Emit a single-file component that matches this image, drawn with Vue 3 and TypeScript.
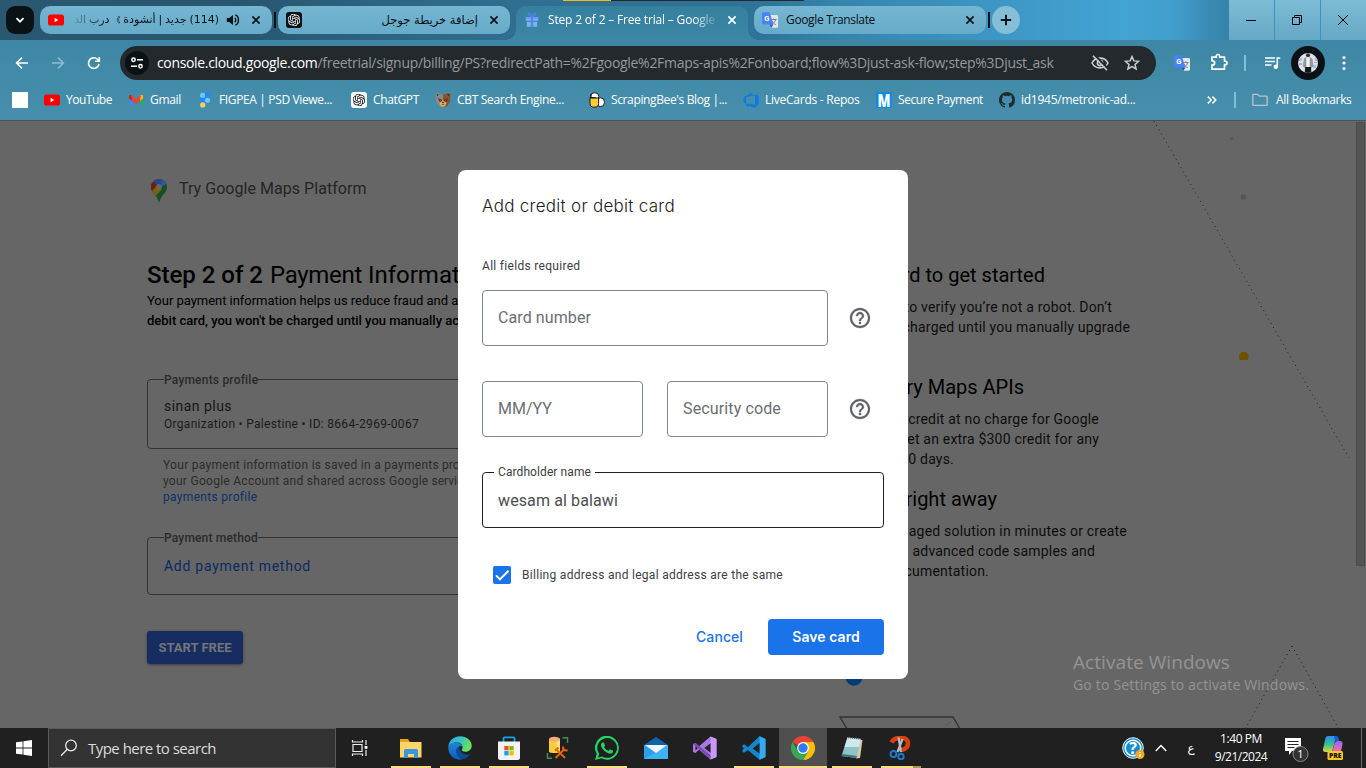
<script setup lang="ts">
interface Bookmark {
  icon: string
  label: string
  slot: number
  fit: number
}
interface Line {
  text: string
  end: number
}
interface Section {
  title: Line
  body: Line[]
}
interface TaskApp {
  icon: string
  state: 'none' | 'open' | 'active' | 'multi'
}

// Spreads a label over a fixed measure by adjusting its tracking.
const vFit = {
  mounted(el: HTMLElement, binding: { value: number }) {
    const natural = el.getBoundingClientRect().width
    const count = (el.textContent ?? '').length
    if (count > 1) el.style.letterSpacing = `${((binding.value - natural) / count).toFixed(3)}px`
  },
}

const bookmarks: Bookmark[] = [
  { icon: 'youtube', label: 'YouTube', slot: 84, fit: 46 },
  { icon: 'gmail', label: 'Gmail', slot: 69, fit: 31 },
  { icon: 'figpea', label: 'FIGPEA | PSD Viewe...', slot: 154, fit: 113 },
  { icon: 'gpt', label: 'ChatGPT', slot: 84, fit: 46 },
  { icon: 'bear', label: 'CBT Search Engine...', slot: 154, fit: 107 },
  { icon: 'bee', label: "ScrapingBee's Blog |...", slot: 154, fit: 116 },
  { icon: 'devops', label: 'LiveCards - Repos', slot: 133, fit: 94.5 },
  { icon: 'm', label: 'Secure Payment', slot: 123, fit: 85 },
  { icon: 'github', label: 'id1945/metronic-ad...', slot: 150, fit: 114.5 },
]

const COLUMN_LEFT = 780
const sections: Section[] = [
  {
    title: { text: 'card to get started', end: 1045 },
    body: [
      { text: 'to verify you’re not a robot. Don’t', end: 1112 },
      { text: 'charged until you manually upgrade', end: 1130 },
    ],
  },
  {
    title: { text: 'Try Maps APIs', end: 1024 },
    body: [
      { text: 'credit at no charge for Google', end: 1099 },
      { text: 'get an extra $300 credit for any', end: 1099 },
      { text: '90 days.', end: 954 },
    ],
  },
  {
    title: { text: 'right away', end: 997 },
    body: [
      { text: 'managed solution in minutes or create', end: 1127 },
      { text: 'advanced code samples and', end: 1095 },
      { text: 'documentation.', end: 989 },
    ],
  },
]

const apps: TaskApp[] = [
  { icon: 'explorer', state: 'open' },
  { icon: 'edge', state: 'open' },
  { icon: 'store', state: 'open' },
  { icon: 'sql', state: 'none' },
  { icon: 'whatsapp', state: 'open' },
  { icon: 'mail', state: 'none' },
  { icon: 'vs', state: 'none' },
  { icon: 'vscode', state: 'open' },
  { icon: 'chrome', state: 'active' },
  { icon: 'notepad', state: 'open' },
  { icon: 'snip', state: 'multi' },
]

const lineWidth = (line: Line) => ({ width: `${line.end - COLUMN_LEFT}px` })
</script>

<template>
  <div class="screen">
    <svg class="defs" width="0" height="0">
      <defs>
        <symbol id="i-youtube" viewBox="0 0 16 16">
          <rect x="0" y="2.5" width="16" height="11" rx="2.6" fill="#f00" />
          <path d="M6.6 5.8v4.4L10.3 8z" fill="#fff" />
        </symbol>
        <symbol id="i-gmail" viewBox="0 0 16 16">
          <path d="M1 4.2v9h3.2V6.6z" fill="#4285f4" />
          <path d="M15 4.2v9h-3.2V6.6z" fill="#34a853" />
          <path d="M11.8 3.2 15 3v3.6l-3.2 2.5z" fill="#fbbc04" />
          <path d="M1 3l3.2.2v5.9L1 6.6z" fill="#c5221f" />
          <path d="M3 3 8 6.9 13 3l-1.2 6.1L8 11.8 4.2 9.1z" fill="#ea4335" />
        </symbol>
        <symbol id="i-figpea" viewBox="0 0 16 16">
          <circle cx="5.7" cy="3.4" r="2.6" fill="#74c6ff" />
          <circle cx="10.6" cy="3.4" r="2.6" fill="#1a8cff" />
          <circle cx="5.7" cy="8.2" r="2.6" fill="#1a8cff" />
          <circle cx="10.6" cy="8.2" r="2.5" fill="#74c6ff" />
          <circle cx="5.7" cy="12.9" r="2.6" fill="#f8d05a" />
        </symbol>
        <symbol id="knot" viewBox="0 0 24 24">
          <path fill="currentColor" d="M22.2819 9.8211a5.9847 5.9847 0 0 0-.5157-4.9108 6.0462 6.0462 0 0 0-6.5098-2.9A6.0651 6.0651 0 0 0 4.9807 4.1818a5.9847 5.9847 0 0 0-3.9977 2.9 6.0462 6.0462 0 0 0 .7427 7.0966 5.98 5.98 0 0 0 .511 4.9107 6.051 6.051 0 0 0 6.5146 2.9001A5.9847 5.9847 0 0 0 13.2599 24a6.0557 6.0557 0 0 0 5.7718-4.2058 5.9894 5.9894 0 0 0 3.9977-2.9001 6.0557 6.0557 0 0 0-.7475-7.0729zm-9.022 12.6081a4.4755 4.4755 0 0 1-2.8764-1.0408l.1419-.0804 4.7783-2.7582a.7948.7948 0 0 0 .3927-.6813v-6.7369l2.02 1.1686a.071.071 0 0 1 .038.052v5.5826a4.504 4.504 0 0 1-4.4945 4.4944zm-9.6607-4.1254a4.4708 4.4708 0 0 1-.5346-3.0137l.142.0852 4.783 2.7582a.7712.7712 0 0 0 .7806 0l5.8428-3.3685v2.3324a.0804.0804 0 0 1-.0332.0615L9.74 19.9502a4.4992 4.4992 0 0 1-6.1408-1.6464zM2.3408 7.8956a4.485 4.485 0 0 1 2.3655-1.9728V11.6a.7664.7664 0 0 0 .3879.6765l5.8144 3.3543-2.0201 1.1685a.0757.0757 0 0 1-.071 0l-4.8303-2.7865A4.504 4.504 0 0 1 2.3408 7.872zm16.5963 3.8558L13.1038 8.364 15.1192 7.2a.0757.0757 0 0 1 .071 0l4.8303 2.7913a4.4944 4.4944 0 0 1-.6765 8.1042v-5.6772a.79.79 0 0 0-.407-.667zm2.0107-3.0231l-.142-.0852-4.7735-2.7818a.7759.7759 0 0 0-.7854 0L9.409 9.2297V6.8974a.0662.0662 0 0 1 .0284-.0615l4.8303-2.7866a4.4992 4.4992 0 0 1 6.6802 4.66zM8.3065 12.863l-2.02-1.1638a.0804.0804 0 0 1-.038-.0567V6.0742a4.4992 4.4992 0 0 1 7.3757-3.4537l-.142.0805L8.704 5.459a.7948.7948 0 0 0-.3927.6813zm1.0976-2.3654l2.602-1.4998 2.6069 1.4998v2.9994l-2.5974 1.4997-2.6067-1.4997Z" />
        </symbol>
        <symbol id="i-gpt" viewBox="0 0 16 16">
          <rect width="16" height="16" rx="3" fill="#fff" />
          <use href="#knot" x="1.7" y="1.7" width="12.6" height="12.6" color="#111" />
        </symbol>
        <symbol id="i-gptdark" viewBox="0 0 16 16">
          <rect width="16" height="16" rx="3" fill="#0b1216" />
          <use href="#knot" x="1.7" y="1.7" width="12.6" height="12.6" color="#fff" />
        </symbol>
        <symbol id="i-bear" viewBox="0 0 16 16">
          <path d="M.5 1.5 4 1l2 1.500h2v12.800L4 14 1 10z" fill="#85898b" />
          <path d="M15.500 1.500 12 1l-2 1.500H8v12.800l4-1.300 3-4z" fill="#8a5424" />
          <path d="M1.500 2.600 3.600 2l-1 2.500zM14.500 2.600 12.400 2l1 2.500z" fill="#3a2a20" />
          <path d="M3 6 7 8v2.500L4.500 9.500zM13 6 9 8v2.500l2.500-1z" fill="#3a2a20" />
          <path d="M3.800 7.300 6.600 8.300 5.400 9zM12.200 7.300 9.400 8.300l1.200.7z" fill="#f33" />
          <path d="M4.500 10.600 8 8.600l3.500 2L10 14.500H6z" fill="#e0b05e" />
          <path d="M6.600 10h2.800L8 11.500zM6.400 13l1.600-.8 1.600.8z" fill="#2a1a10" />
        </symbol>
        <symbol id="i-bee" viewBox="0 0 16 16">
          <g stroke="#15191b" stroke-width="1">
            <rect x="1.600" y=".8" width="8.200" height="7.400" rx="3.600" fill="#fff" />
            <rect x="7.600" y="5.800" width="7.800" height="8.800" rx="3.800" fill="#fff" />
            <path d="M1 6h8.600v5.400a4.300 3.800 0 0 1-8.600 0z" fill="#fc3" />
            <path d="M.6 5.600h6M2 2v3" fill="none" />
          </g>
        </symbol>
        <symbol id="i-devops" viewBox="0 0 16 16">
          <path d="M.5 6.200 2 4.200 6.600 2.400V.6l4 3L3 5.100v6.100L.5 10.500zM15.600 3.200v9.400l-3.900 3.200-6.200-2v2L2 11.400l10 1.100V4.100l-5-1.400z" fill="#0a7be0" />
        </symbol>
        <symbol id="i-m" viewBox="0 0 16 16">
          <rect width="16" height="16" fill="#0a8be8" />
          <text x="8" y="14.700" text-anchor="middle" font-family="Open Sans, sans-serif" font-weight="800" font-size="18" textLength="13" lengthAdjust="spacingAndGlyphs" fill="#fff">M</text>
        </symbol>
        <symbol id="i-github" viewBox="0 0 16 16">
          <path fill="#1f2a30" d="M8 0C3.58 0 0 3.58 0 8c0 3.54 2.29 6.53 5.47 7.59.4.07.55-.17.55-.38v-1.49c-2.01.37-2.53-.49-2.69-.94-.09-.23-.48-.94-.82-1.13-.28-.15-.68-.52-.01-.53.63-.01 1.08.58 1.23.82.72 1.21 1.87.87 2.33.66.07-.52.28-.87.51-1.07-1.78-.2-3.64-.89-3.64-3.95 0-.87.31-1.59.82-2.15-.08-.2-.36-1.02.08-2.12 0 0 .67-.21 2.2.82a7.6 7.6 0 0 1 4 0c1.53-1.04 2.2-.82 2.2-.82.44 1.1.16 1.92.08 2.12.51.56.82 1.27.82 2.15 0 3.07-1.87 3.75-3.65 3.95.29.25.54.73.54 1.48v2.2c0 .21.15.46.55.38A8 8 0 0 0 16 8c0-4.42-3.58-8-8-8z" />
        </symbol>
        <symbol id="i-translate" viewBox="0 0 16 16">
          <path d="M8 3h6.600A1.400 1.400 0 0 1 16 4.400v10A1.400 1.400 0 0 1 14.600 15.800H9.500z" fill="#e3e6ea" />
          <path d="M8.600 7.500h6M11.600 6.500v1M13.700 7.600c-.5 2-2.300 4-4 4.900M10 9c1 2 2.300 3 3.800 3.600" stroke="#6c7780" stroke-width=".9" fill="none" />
          <path d="M1.300.3h6.300l3.800 12.200H1.300A1.300 1.300 0 0 1 0 11.200V1.600A1.300 1.300 0 0 1 1.300.3z" fill="#4683f3" />
          <path d="M7.700 12.500h3.700L9.300 15.800z" fill="#2556c4" />
          <text x="4.900" y="8.900" text-anchor="middle" font-family="Roboto, sans-serif" font-weight="700" font-size="7.500" fill="#fff">G</text>
        </symbol>
        <symbol id="i-x" viewBox="0 0 10 10">
          <path d="M1.400 1.400l7.200 7.200M8.600 1.400 1.400 8.600" stroke="currentColor" stroke-width="1.700" />
        </symbol>
        <symbol id="i-help" viewBox="0 0 24 24">
          <path fill="#5f6368" stroke="#5f6368" stroke-width=".3" d="M11 18h2v-2h-2v2zm1-16C6.480 2 2 6.480 2 12s4.480 10 10 10 10-4.480 10-10S17.520 2 12 2zm0 18c-4.410 0-8-3.590-8-8s3.590-8 8-8 8 3.590 8 8-3.590 8-8 8zm0-14c-2.210 0-4 1.790-4 4h2c0-1.100.9-2 2-2s2 .9 2 2c0 2-3 1.750-3 5h2c0-2.250 3-2.500 3-5 0-2.210-1.790-4-4-4z" />
        </symbol>

        <symbol id="t-explorer" viewBox="0 0 24 24">
          <path d="M1 3h8l2 3h10.500v15H1z" fill="#e8a21c" />
          <rect x="1" y="6" width="21.500" height="15.500" fill="#fbd566" />
          <path d="M5 22v-7.500A1.500 1.500 0 0 1 6.500 13h11a1.500 1.500 0 0 1 1.500 1.500V22h-4v-4H9v4z" fill="#3b94dc" />
        </symbol>
        <symbol id="t-edge" viewBox="0 0 24 24">
          <defs>
            <linearGradient id="eg1" x1="0" y1="0" x2="1" y2=".4">
              <stop offset="0" stop-color="#30a7e8" />
              <stop offset=".5" stop-color="#35c1c9" />
              <stop offset="1" stop-color="#67e25a" />
            </linearGradient>
            <linearGradient id="eg2" x1="0" y1="0" x2="0" y2="1">
              <stop offset="0" stop-color="#1c86d8" />
              <stop offset="1" stop-color="#0f5cb8" />
            </linearGradient>
          </defs>
          <path d="M.3 12C.3 5.300 5.400.3 12 .3c6.800 0 11.700 4.300 11.700 9.500 0 3.600-2.800 6-6 6-2.600 0-4-1-4-2 0-.700.800-1 .800-2.600C14.500 8.600 12 6.600 8.600 6.600 4 6.600.8 9.300.3 12z" fill="url(#eg1)" />
          <path d="M.3 12c.3-3 3.200-5.400 7.400-5.400 3.400 0 6 1.800 6.600 4C12 9.500 8.500 11 8.500 15c0 4.600 4 8.200 7 8-1.200.5-2.300.7-3.500.7C5.400 23.700.3 18.500.3 12z" fill="url(#eg2)" />
          <path d="M8.500 15c0-2.200 1.200-4 3-4.700-.6 4.500 3 8.300 7 8.300 1.500 0 2.600-.4 3.600-.9-1.600 3-4.300 5.300-7 5.300-3.400 0-6.600-3.600-6.600-8z" fill="#0b4b94" />
        </symbol>
        <symbol id="t-store" viewBox="0 0 24 24">
          <path d="M6.500 6V2.300a1 1 0 0 1 1-1h9a1 1 0 0 1 1 1V6" fill="none" stroke="#18a0ea" stroke-width="1.800" />
          <path d="M1 5.500h22v16A2.500 2.500 0 0 1 20.500 24h-17A2.500 2.500 0 0 1 1 21.500z" fill="#f2f2f2" />
          <rect x="7.300" y="10" width="4.300" height="4.300" fill="#f25022" />
          <rect x="12.400" y="10" width="4.300" height="4.300" fill="#7fba00" />
          <rect x="7.300" y="15.100" width="4.300" height="4.300" fill="#00a4ef" />
          <rect x="12.400" y="15.100" width="4.300" height="4.300" fill="#ffb900" />
        </symbol>
        <symbol id="t-sql" viewBox="0 0 24 24">
          <path d="M3 3h11v12.500c0 2-11 2-11 0z" fill="#f6cd3a" />
          <path d="M10.500 4h3.500v12h-3.500z" fill="#fbe27a" />
          <ellipse cx="8.500" cy="3.200" rx="5.500" ry="2.500" fill="#f4ac7a" />
          <path d="M16.500 1.800h5V7M1.500 17v5.300H6" fill="none" stroke="#3f8f5a" stroke-width="1.500" />
          <path d="m10.500 13.500 8.500 8.500M17.500 14 9.500 22" stroke="#e8660c" stroke-width="1.900" />
          <path d="m9 14.500 3.500-3M17 10.500l.5 3.500 4 .5" fill="none" stroke="#e8660c" stroke-width="2" />
        </symbol>
        <symbol id="t-whatsapp" viewBox="0 0 24 24">
          <path fill="#25d366" d="M17.472 14.382c-.297-.149-1.758-.867-2.030-.967-.273-.099-.471-.148-.670.150-.197.297-.767.966-.940 1.164-.173.199-.347.223-.644.075-.297-.150-1.255-.463-2.390-1.475-.883-.788-1.480-1.761-1.653-2.059-.173-.297-.018-.458.130-.606.134-.133.298-.347.446-.520.149-.174.198-.298.298-.497.099-.198.050-.371-.025-.520-.075-.149-.669-1.612-.916-2.207-.242-.579-.487-.500-.669-.510-.173-.008-.371-.010-.570-.010-.198 0-.520.074-.792.372-.272.297-1.040 1.016-1.040 2.479 0 1.462 1.065 2.875 1.213 3.074.149.198 2.096 3.200 5.077 4.487.709.306 1.262.489 1.694.625.712.227 1.360.195 1.871.118.571-.085 1.758-.719 2.006-1.413.248-.694.248-1.289.173-1.413-.074-.124-.272-.198-.570-.347M12 21.800a9.800 9.800 0 0 1-5.030-1.380l-3.750.98 1-3.650A9.870 9.870 0 1 1 12 21.800m8.400-18.300A11.800 11.800 0 0 0 1.750 17.800L.06 24l6.300-1.650A11.880 11.880 0 0 0 20.400 3.500" />
        </symbol>
        <symbol id="t-mail" viewBox="0 0 24 24">
          <path d="M0 9 12 1l12 8v3H0z" fill="#0f62b0" />
          <path d="M0 9v14h24V9z" fill="#2aa0ea" />
          <path d="M0 23 24 9v14z" fill="#4cc0f8" opacity=".6" />
          <path d="M1 9h22l-11 8z" fill="#f3f7fb" />
        </symbol>
        <symbol id="t-vs" viewBox="0 0 24 24">
          <path d="M17.500.5 23.500 3v18l-6 2.500L6 13.800 2.500 17 0 16V8l2.500-1L6 10.200z" fill="#a878e0" />
          <path d="M17.500.5 23.500 3v18l-6 2.500z" fill="#c79bf5" />
          <path d="M17.500 7.200v9.600L11.400 12zM2.500 9.500v5L5 12z" fill="#222" />
          <path d="M2.500 7 17.500 19v4.500L0 8z" fill="#7b49bd" />
        </symbol>
        <symbol id="t-vscode" viewBox="0 0 24 24">
          <path d="M17.500.3 5.800 11.200 2.200 8.300.4 9.300v1.800L2 12.500.4 14v1.800l1.800 1 3.600-2.900 11.700 9.800 6-2.700V3z" fill="#1486cf" />
          <path d="M17.500.3 23.500 3v18l-6 2.700z" fill="#35aaf0" />
          <path d="M17.500 7v10.600L10.600 12.400z" fill="#222" />
        </symbol>
        <symbol id="t-chrome" viewBox="0 0 24 24">
          <path d="M12 12 1.600 6A12 12 0 0 1 22.400 6z" fill="#ea4335" />
          <path d="M12 12V6h10.400A12 12 0 0 1 12 24l5.200-9z" fill="#fbbc05" />
          <path d="M12 12l5.200 3L12 24A12 12 0 0 1 1.600 6l5.200 9z" fill="#34a853" />
          <circle cx="12" cy="12" r="5.900" fill="#fff" />
          <circle cx="12" cy="12" r="4.700" fill="#3079f0" />
        </symbol>
        <symbol id="t-notepad" viewBox="0 0 24 24">
          <path d="M7 2 22.500 4l-2.500 18-4 .500z" fill="#d8c9a4" />
          <path d="M7.500 1.500 21 3l-4.500 19L1.500 20z" fill="#8fc3cb" />
          <path d="M7.500 1.500 21 3l-2 8L4.500 11z" fill="#cfe8ec" />
          <path d="M8 1.500 21 3" stroke="#555" stroke-width="1.500" stroke-dasharray="1 1" />
          <path d="M1.500 20 16.500 22l.5-2-14.500-2z" fill="#3c7780" />
        </symbol>
        <symbol id="t-snip" viewBox="0 0 24 24">
          <path d="M2.500 6.500C6 0 19 0 19 7c0 5-3 6.500-7 7" fill="none" stroke="#d8400f" stroke-width="4.500" />
          <path d="M9.500 1.500 12 16M13.500 3 8.500 16" stroke="#b8bcc0" stroke-width="2.200" />
          <circle cx="4.500" cy="18" r="2.900" fill="none" stroke="#1e78c8" stroke-width="2" />
          <circle cx="12" cy="20.500" r="2.700" fill="none" stroke="#1e78c8" stroke-width="2" />
        </symbol>
      </defs>
    </svg>

    <header class="tabstrip">
      <div class="top-progress"><i></i></div>
      <button class="tab-search">
        <svg width="10" height="10" viewBox="0 0 10 10"><path d="M1.500 3.200 5 6.700l3.500-3.500" fill="none" stroke="#fff" stroke-width="1.800" /></svg>
      </button>
      <div class="tab tab-rtl">
        <svg class="ico"><use href="#i-youtube" /></svg>
        <span class="arabic fade-left" dir="rtl">(114) جديد | أنشودة <span class="mark">》</span> درب الد</span>
        <svg class="speaker" width="14" height="14" viewBox="0 0 14 14">
          <path d="M.8 5v4h2.500L7 12V2L3.300 5z" fill="#0b1216" />
          <path d="M8.700 4.700c1.400 1 1.400 3.600 0 4.600M9.300 1.800c4.200 1.500 4.200 8.900 0 10.400" fill="none" stroke="#0b1216" stroke-width="1.400" />
        </svg>
        <svg class="x"><use href="#i-x" /></svg>
      </div>
      <i class="tab-sep"></i>
      <div class="tab tab-rtl">
        <svg class="ico"><use href="#i-gptdark" /></svg>
        <span class="arabic second" dir="rtl">إضافة خريطة جوجل</span>
        <svg class="x"><use href="#i-x" /></svg>
      </div>
      <div class="tab-active">
        <svg class="ico" viewBox="0 0 16 16">
          <path d="M1.800 5h5.400v3.800H1.800zM8.800 5h5.400v3.800H8.800zM2.800 9.800h4.400v5H2.800zM8.800 9.800h4.400v5H8.800z" fill="#7db0f8" />
          <path d="M7.600 4.600C4 4.600 3.400 1.600 5 1.400c1.400 0 2.600 1.600 3 3 .4-1.400 1.600-3 3-3 1.600.2 1 3.200-2.600 3.200" fill="none" stroke="#4d80ec" stroke-width="1.300" />
          <path d="M6.400 5h3.200v9.800H6.400zM1.500 5h13v2h-13z" fill="#5b8ff2" opacity=".6" />
        </svg>
        <span class="ui fade-right"><span v-fit="167" class="fit">Step 2 of 2 – Free trial – Google</span></span>
        <svg class="x"><use href="#i-x" /></svg>
      </div>
      <div class="tab tab-last">
        <svg class="ico"><use href="#i-translate" /></svg>
        <span class="ui"><span v-fit="89" class="fit">Google Translate</span></span>
        <svg class="x"><use href="#i-x" /></svg>
      </div>
      <i class="tab-sep"></i>
      <button class="new-tab">
        <svg width="12" height="12" viewBox="0 0 12 12"><path d="M6 .8v10.400M.8 6h10.400" stroke="#0b1216" stroke-width="1.900" /></svg>
      </button>
      <div class="win-controls">
        <span><svg width="10" height="10" viewBox="0 0 10 10"><path d="M0 5.500h10" stroke="#000" /></svg></span>
        <span><svg width="10" height="10" viewBox="0 0 10 10"><path d="M.5 2.500h7v7h-7zM2.500 2.500v-2h7v7h-2" fill="none" stroke="#000" /></svg></span>
        <span><svg width="10" height="10" viewBox="0 0 10 10"><path d="M0 0l10 10M10 0 0 10" stroke="#000" /></svg></span>
      </div>
    </header>

    <div class="toolbar">
      <svg class="nav" width="14" height="14" viewBox="0 0 14 14"><path d="M13 7H2M7 1.600 1.600 7 7 12.400" fill="none" stroke="#fff" stroke-width="1.600" /></svg>
      <svg class="nav" width="14" height="14" viewBox="0 0 14 14"><path d="M1 7h11M7 1.600 12.400 7 7 12.400" fill="none" stroke="#8dbccf" stroke-width="1.600" /></svg>
      <svg class="nav" width="14" height="14" viewBox="0 0 14 14"><path d="M12 8a5.300 5.300 0 1 1-1.500-4.700l1.500 1.500" fill="none" stroke="#fff" stroke-width="1.700" /><path d="M12.300 1v4.300H8" fill="none" stroke="#fff" stroke-width="1.600" /></svg>
      <div class="omnibox">
        <span class="site">
          <svg width="14" height="14" viewBox="0 0 14 14" fill="none" stroke="#fff" stroke-width="1.500"><circle cx="3.500" cy="3.800" r="1.700" /><path d="M7 3.800h6" /><circle cx="10.500" cy="10.200" r="1.700" /><path d="M1 10.200h6" /></svg>
        </span>
        <span class="url"><span v-fit="160.500" class="fit host">console.cloud.google.com</span><span v-fit="736" class="fit">/freetrial/signup/billing/PS?redirectPath=%2Fgoogle%2Fmaps-apis%2Fonboard;flow%3Djust-ask-flow;step%3Djust_ask</span></span>
        <svg class="eye" width="18" height="16" viewBox="0 0 18 16" fill="none" stroke="#c9ced0" stroke-width="1.600"><path d="M1 8c3.400-6.500 12.600-6.500 16 0-3.400 6.500-12.600 6.500-16 0z" /><circle cx="9" cy="8" r="2.600" /><path d="M3.500-.2l14 14.400" stroke="#23292d" stroke-width="2" /><path d="M2 .8l14 14.400" /></svg>
        <svg class="star" width="16" height="16" viewBox="0 0 16 16"><path d="m8 1.600 1.900 4.300 4.700.4-3.600 3.100 1.100 4.600L8 11.600 3.900 14 5 9.400 1.400 6.300l4.700-.4z" fill="none" stroke="#c9ced0" stroke-width="1.500" /></svg>
      </div>
      <svg class="ext" width="16" height="16"><use href="#i-translate" /></svg>
      <svg class="puzzle" width="18" height="18" viewBox="0 0 18 18"><path d="M2 4.200h4.300V3.200a1.700 1.700 0 0 1 3.400 0v1h4.800v4h.8a1.700 1.700 0 0 1 0 3.400h-.8v4.600H2v-4.300h.6a2 2 0 0 0 0-4H2z" fill="none" stroke="#fff" stroke-width="1.700" stroke-linejoin="round" /></svg>
      <i class="bar"></i>
      <svg class="queue" width="16" height="14" viewBox="0 0 16 14"><path d="M0 2h10M0 5.500h10M0 9h6.500" stroke="#fff" stroke-width="1.500" /><path d="M12.300 11V2h3" fill="none" stroke="#fff" stroke-width="1.600" /><circle cx="10.800" cy="10.800" r="2.200" fill="#fff" /></svg>
      <svg class="avatar" width="34" height="34" viewBox="0 0 34 34">
        <defs><clipPath id="av"><circle cx="17" cy="17" r="10" /></clipPath></defs>
        <circle cx="17" cy="17" r="17" fill="#0b1216" />
        <g clip-path="url(#av)">
          <rect x="7" y="7" width="20" height="20" fill="#dfe2ea" />
          <path d="M8 12h3v3H8zM24 11h3v4h-3zM22 19h3v3h-3z" fill="#aebbd8" />
          <path d="M8 17h3v2H8zM23 16h4v1h-4z" fill="#d9a3ae" />
          <path d="M13 12.500 15 11h4l2.500 2 .8 7-1.800 2H13.500l-1.700-2z" fill="#8f9a9a" />
          <path d="M15.300 11h3.400v11h-3.400z" fill="#f0f2f2" />
          <circle cx="17" cy="9.300" r="2" fill="#3b2c25" />
          <path d="M14.300 21h5.700l.5 7h-7z" fill="#14181c" />
        </g>
      </svg>
      <svg class="dots" width="4" height="16" viewBox="0 0 4 16" fill="#fff"><circle cx="2" cy="2.500" r="1.600" /><circle cx="2" cy="8" r="1.600" /><circle cx="2" cy="13.500" r="1.600" /></svg>
    </div>

    <nav class="bookmarks">
      <i class="blank"></i>
      <div v-for="b in bookmarks" :key="b.label" class="bookmark" :style="{ width: `${b.slot}px` }">
        <svg class="ico"><use :href="`#i-${b.icon}`" /></svg>
        <span v-fit="b.fit" class="fit">{{ b.label }}</span>
      </div>
      <svg class="more" width="10" height="8" viewBox="0 0 10 8"><path d="M.8.600 4.200 4 .8 7.400M5.400.600 8.800 4 5.400 7.400" fill="none" stroke="#fff" stroke-width="1.500" /></svg>
      <i class="bar"></i>
      <svg class="folder" width="16" height="14" viewBox="0 0 16 14"><path d="M.8 2.300q0-1 1-1h4l1.600 1.800h6.800q1 0 1 1v7.300q0 1-1 1H1.800q-1 0-1-1z" fill="none" stroke="#c0c3c4" stroke-width="1.300" /></svg>
      <span v-fit="75.500" class="fit">All Bookmarks</span>
    </nav>

    <main class="page">
      <svg class="decor" width="1366" height="607" viewBox="0 121 1366 607">
        <g stroke="#1c1c1c" fill="none">
          <path d="M1154 121 1349 458" stroke-width="1" stroke-dasharray="1 3.860" />
          <path d="M1292 646 1245 729M1292 646l47 83" stroke-width="1" stroke-dasharray="1 3.700" />
          <path d="M847 729 840 717h113l7 12" stroke="#333" stroke-width="1.400" />
        </g>
        <circle cx="1231.500" cy="138.500" r="1.700" fill="#585858" />
        <circle cx="1243.500" cy="197" r="2.700" fill="#555" />
        <path d="M1240.200 360a4.900 4.900 0 1 1 7.200 0z" fill="#6e5000" />
        <circle cx="854" cy="677.500" r="8.300" fill="#003c78" />
        <path d="m946 725 5-3" stroke="#555" stroke-dasharray="2 2" />
      </svg>

      <section class="left">
        <div class="brand">
          <svg width="16" height="24" viewBox="0 0 16 24">
            <defs><clipPath id="pin"><path d="M8 0a8 8 0 0 1 8 8c0 3.200-1.800 5.300-3.800 7.800C10.300 18.200 9.200 20 8.600 22.500c-.2 1-1 1-1.200 0C6.800 20 5.700 18.200 3.800 15.800 1.800 13.300 0 11.200 0 8a8 8 0 0 1 8-8z" /></clipPath></defs>
            <g clip-path="url(#pin)">
              <path d="M0 0h16v24H0z" fill="#194f27" />
              <path d="M2 0h14v4.500L9.500 9 8 8 2 3z" fill="#26488a" />
              <path d="M10.500 0H16v4.500L11 7z" fill="#30599c" />
              <path d="M2 2.500 6.500 6 1.500 12.500 0 11V4z" fill="#701d17" />
              <path d="M1 12 5.800 6.500 10.500 10.500 4.300 17.500 2 15z" fill="#79600a" />
            </g>
            <circle cx="8" cy="8" r="3" fill="#666" />
          </svg>
          <span v-fit="187.500" class="fit">Try Google Maps Platform</span>
        </div>
        <h1><b><span v-fit="116" class="fit">Step 2 of 2</span></b> <span class="rest"><span v-fit="92" class="fit">Payment</span> Information</span></h1>
        <p class="intro"><span v-fit="301" class="fit">Your payment information helps us reduce fraud and</span> abuse</p>
        <p class="intro strong"><span v-fit="295" class="fit">debit card, you won't be charged until you manually</span> activate</p>

        <div class="box profile">
          <span class="legend"><span v-fit="94" class="fit">Payments profile</span></span>
          <div class="name"><span v-fit="68" class="fit">sinan plus</span></div>
          <div class="org"><span v-fit="255" class="fit">Organization • Palestine • ID: 8664-2969-0067</span></div>
        </div>
        <div class="note">
          <div><span v-fit="276" class="fit">Your payment information is saved in a payments</span> profile</div>
          <div><span v-fit="265.500" class="fit">your Google Account and shared across Google</span> services</div>
          <a><span v-fit="94" class="fit">payments profile</span></a>
        </div>
        <div class="box method">
          <span class="legend"><span v-fit="94" class="fit">Payment method</span></span>
          <a><span v-fit="147" class="fit">Add payment method</span></a>
        </div>
        <button class="start"><span v-fit="73" class="fit">START FREE</span></button>
      </section>

      <section class="right">
        <article v-for="s in sections" :key="s.title.text">
          <h2 :style="lineWidth(s.title)">{{ s.title.text }}</h2>
          <p v-for="l in s.body" :key="l.text" :style="lineWidth(l)">{{ l.text }}</p>
        </article>
      </section>

      <i class="scrollbar"></i>

      <div class="dialog">
        <h3><span v-fit="193" class="fit">Add credit or debit card</span></h3>
        <div class="hint"><span v-fit="98" class="fit">All fields required</span></div>
        <div class="row">
          <div class="field wide"><span v-fit="93" class="fit">Card number</span></div>
          <svg class="help"><use href="#i-help" /></svg>
        </div>
        <div class="row second">
          <div class="field half"><span v-fit="54" class="fit">MM/YY</span></div>
          <div class="field half"><span v-fit="98" class="fit">Security code</span></div>
          <svg class="help"><use href="#i-help" /></svg>
        </div>
        <div class="field holder">
          <span class="float"><span v-fit="93" class="fit">Cardholder name</span></span>
          <span v-fit="120" class="fit">wesam al balawi</span>
        </div>
        <div class="check">
          <svg width="18" height="18" viewBox="0 0 18 18"><rect width="18" height="18" rx="2" fill="#1a73e8" /><path d="m3 9.400 4 4 8.500-8.600" fill="none" stroke="#fff" stroke-width="2" /></svg>
          <span v-fit="261" class="fit">Billing address and legal address are the same</span>
        </div>
        <div class="actions">
          <button class="cancel"><span v-fit="47" class="fit">Cancel</span></button>
          <button class="save"><span v-fit="67.500" class="fit">Save card</span></button>
        </div>
      </div>

      <div class="watermark">
        <div class="big"><span v-fit="157" class="fit">Activate Windows</span></div>
        <div class="small"><span v-fit="236" class="fit">Go to Settings to activate Windows.</span></div>
      </div>
    </main>

    <footer class="taskbar">
      <span class="win"><svg width="16" height="16" viewBox="0 0 16 16" fill="#fff"><path d="M0 2.300 6.600 1.400v6.200H0zM7.400 1.300 16 0v7.600H7.400zM0 8.400h6.600v6.200L0 13.700zM7.400 8.400H16V16l-8.600-1.300z" /></svg></span>
      <div class="search">
        <svg width="18" height="18" viewBox="0 0 18 18" fill="none" stroke="#e6e6e6" stroke-width="1.300"><circle cx="11" cy="6.500" r="5.300" /><path d="M7.300 10.300 1 16.800" /></svg>
        <span v-fit="128" class="fit">Type here to search</span>
      </div>
      <span class="taskview"><svg width="18" height="18" viewBox="0 0 18 18" fill="none" stroke="#eee" stroke-width="1.200"><path d="M2 5.500h9v7H2zM1.500 1v2h10V1M1.500 17v-2h10v2M15 1v5M15 11v6" /><path d="M13.600 7h2.800v2.800h-2.800z" fill="#fff" stroke="none" /></svg></span>
      <span v-for="a in apps" :key="a.icon" class="app" :class="a.state">
        <svg width="24" height="24"><use :href="`#t-${a.icon}`" /></svg>
      </span>
      <div class="tray">
        <svg class="t-help" width="23" height="23" viewBox="0 0 23 23">
          <circle cx="11" cy="11" r="10.300" fill="#168ccf" stroke="#eaf4fa" stroke-width="1" />
          <circle cx="11" cy="11" r="7.800" fill="#168ccf" stroke="#fff" stroke-width="1.500" />
          <text x="11" y="17" text-anchor="middle" font-family="Open Sans, sans-serif" font-size="16" font-weight="700" fill="#fff">?</text>
          <circle cx="18" cy="17.500" r="4.500" fill="#f0a81e" /><path d="M18 15v1M18 17v3" stroke="#fff" stroke-width="1.300" />
        </svg>
        <svg class="t-up" width="12" height="8" viewBox="0 0 12 8"><path d="M.8 7 6 1.500 11.200 7" fill="none" stroke="#fff" stroke-width="1.400" /></svg>
        <span class="lang">ع</span>
        <div class="clock"><div><span v-fit="42" class="fit">1:40 PM</span></div><div><span v-fit="52.500" class="fit">9/21/2024</span></div></div>
        <svg class="t-note" width="26" height="26" viewBox="0 0 26 26">
          <path d="M1 1h16v13H8l-3 4v-4H1z" fill="#fff" /><path d="M3.500 4.500h11M3.500 7.500h11M3.500 10.500h7" stroke="#222" />
          <circle cx="16.500" cy="17" r="7.500" fill="#333" stroke="#8a8a8a" />
          <text x="16.500" y="21" text-anchor="middle" font-family="Open Sans, sans-serif" font-size="11" fill="#fff">1</text>
        </svg>
        <svg class="t-copilot" width="22" height="26" viewBox="0 0 22 26">
          <defs>
            <linearGradient id="cp1" x1="0" y1="0" x2="0" y2="1"><stop offset="0" stop-color="#2a8cf0" /><stop offset=".55" stop-color="#35c48a" /><stop offset="1" stop-color="#e0d53a" /></linearGradient>
            <linearGradient id="cp2" x1="0" y1="0" x2="0" y2="1"><stop offset="0" stop-color="#8c6cf0" /><stop offset=".6" stop-color="#f066b0" /><stop offset="1" stop-color="#f49a4a" /></linearGradient>
          </defs>
          <path d="M6 1h7.500q2 0 2.500 2l.6 3H13L10 17H3.500q-3 0-2.500-3L3.500 3Q4 1 6 1z" fill="url(#cp1)" />
          <path d="M16 21H9l3.500-12.500q.8-2.500 3-2.500h2.500q3 0 2.500 3L18.500 19q-.6 2-2.500 2z" fill="url(#cp2)" />
          <path d="M12 1h2q2 0 2.500 2l.7 3H13z" fill="#1c5bd8" />
          <rect x="5.500" y="16" width="15.500" height="9" rx="1.500" fill="#fcc81c" />
          <text x="13.200" y="23.200" text-anchor="middle" font-family="Open Sans, sans-serif" font-size="7.500" font-weight="800" textLength="12.500" lengthAdjust="spacingAndGlyphs" fill="#111">PRE</text>
        </svg>
        <i class="peek"></i>
      </div>
    </footer>
  </div>
</template>

<style>
body {
  margin: 0;
  overflow: hidden;
}
</style>

<style scoped>
* {
  box-sizing: border-box;
}
.screen {
  width: 1366px;
  height: 768px;
  display: flex;
  flex-direction: column;
  overflow: hidden;
  font-family: 'Open Sans', 'Noto Sans', sans-serif;
  font-size: 12px;
  background: #666;
}
.defs {
  position: absolute;
}
svg {
  display: block;
  flex: none;
}
h1, h2, h3, p {
  margin: 0;
  font-weight: 400;
}
button {
  border: 0;
  padding: 0;
  margin: 0;
  background: none;
  font: inherit;
}
.fit {
  display: inline-block;
  white-space: nowrap;
}
.ico {
  width: 16px;
  height: 16px;
}
.x {
  width: 10px;
  height: 10px;
}

.tabstrip {
  position: relative;
  height: 40px;
  flex: none;
  display: flex;
  align-items: flex-start;
  padding: 6px 0 0 6px;
  background: linear-gradient(90deg, #2a5870 0, #28566e 240px, #2d6888 420px, #306f90 520px, #2f7398 760px, #3585ac 840px, #3d97c5 1000px, #43a3d3 1120px, #429fce 1170px, #3682a8 1228px);
}
.top-progress {
  position: absolute;
  left: 563px;
  top: 0;
  width: 241px;
  height: 1px;
  display: flex;
  background: #23292d;
}
.top-progress i {
  width: 48px;
  background: #fdb913;
}
.tab-search {
  width: 28px;
  height: 28px;
  border-radius: 9px;
  background: #0b1216;
  display: grid;
  place-items: center;
  margin-right: 6px;
}
.tab {
  width: 232px;
  height: 28px;
  border-radius: 10px;
  background: linear-gradient(#76b6d1, #66abca);
  display: flex;
  align-items: center;
  padding: 0 11px 0 8px;
  color: #0b1216;
}
.arabic {
  font-family: 'DejaVu Sans', 'Noto Sans CJK SC', sans-serif;
  font-size: 11px;
  white-space: nowrap;
  width: 147px;
  margin-left: 8px;
  line-height: 20px;
  word-spacing: -0.6px;
}
.arabic.second {
  width: 168px;
  margin-right: 8px;
  font-size: 11.5px;
  word-spacing: 0;
}
.mark {
  font-size: 8px;
}
.tab-rtl .x {
  margin-left: auto;
}
.fade-left {
  -webkit-mask-image: linear-gradient(90deg, rgba(0, 0, 0, 0.1), #000 34px);
  mask-image: linear-gradient(90deg, rgba(0, 0, 0, 0.1), #000 34px);
}
.fade-right {
  -webkit-mask-image: linear-gradient(90deg, #000 145px, transparent 172px);
  mask-image: linear-gradient(90deg, #000 145px, transparent 172px);
}
.speaker {
  margin-left: 7px;
}
.tab-sep {
  width: 2px;
  height: 16px;
  background: #0b1216;
  margin: 6px 2px;
}
.tab-active {
  position: relative;
  width: 232px;
  height: 34px;
  margin: 0 6px;
  border-radius: 10px 10px 0 0;
  background: linear-gradient(#35809f, #3d86a5);
  display: flex;
  align-items: center;
  padding: 0 11px 6px 8px;
  color: #fff;
}
.tab-active::before,
.tab-active::after {
  content: '';
  position: absolute;
  bottom: 0;
  width: 10px;
  height: 10px;
}
.tab-active::before {
  left: -10px;
  background: radial-gradient(circle at 0 0, transparent 9.500px, #3d86a5 10px);
}
.tab-active::after {
  right: -10px;
  background: radial-gradient(circle at 100% 0, transparent 9.500px, #3d86a5 10px);
}
.ui {
  width: 172px;
  margin-left: 8px;
  line-height: 20px;
}
.tab-active .x {
  margin-left: auto;
}
.tab-last .x {
  margin-left: auto;
}
.new-tab {
  width: 28px;
  height: 28px;
  border-radius: 14px;
  background: #84bfd7;
  display: grid;
  place-items: center;
}
.win-controls {
  display: flex;
  gap: 1px;
  width: 137px;
  margin: -6px 0 0 auto;
  height: 40px;
  background: #3d93bf;
}
.win-controls span {
  flex: 1;
  padding-right: 1px;
  display: grid;
  place-items: center;
  background: linear-gradient(#7cbcd6, #66a9c6);
}

.toolbar {
  height: 46px;
  flex: none;
  display: flex;
  align-items: center;
  padding-left: 15px;
  background: linear-gradient(#3d86a5, #438ca9);
}
.nav {
  margin-right: 22px;
}
.omnibox {
  width: 1036px;
  height: 34px;
  margin-left: -3px;
  border-radius: 17px;
  background: #23292d;
  display: flex;
  align-items: center;
  padding-left: 5px;
}
.site {
  width: 24px;
  height: 24px;
  border-radius: 12px;
  background: #0b1216;
  display: grid;
  place-items: center;
}
.url {
  margin-left: 8px;
  width: 933px;
  font-size: 14px;
  line-height: 20px;
  color: #949a9d;
  white-space: nowrap;
}
.host {
  color: #fff;
}
.eye {
  margin-left: 1px;
}
.star {
  margin-left: 15px;
}
.ext {
  margin-left: 18px;
}
.puzzle {
  margin-left: 20px;
  margin-top: -2px;
}
.bar {
  width: 2px;
  height: 16px;
  background: #7cc0dc;
}
.toolbar .bar {
  margin-left: 16px;
}
.queue {
  margin-left: 19px;
}
.avatar {
  margin-left: 10px;
}
.dots {
  margin-left: 17px;
}

.bookmarks {
  height: 35px;
  flex: none;
  display: flex;
  align-items: center;
  padding: 0 0 7px 12px;
  color: #fff;
  background: linear-gradient(#438ca9, #478fac);
  border-bottom: 1px solid #46535a;
}
.blank {
  width: 16px;
  height: 16px;
  background: #fff;
  margin-right: 16px;
}
.bookmark {
  display: flex;
  align-items: center;
  gap: 6px;
  flex: none;
}
.more {
  margin-left: 58px;
}
.bookmarks .bar {
  margin: 0 16px 0 17px;
}
.folder {
  margin-right: 8px;
}

.page {
  position: relative;
  flex: 1;
  display: flex;
  overflow: hidden;
  background: #666;
  font-family: Roboto, sans-serif;
  color: #000;
}
.decor {
  position: absolute;
  left: 0;
  top: 0;
}
.left {
  width: 780px;
  padding: 58px 0 0 147px;
  flex: none;
  white-space: nowrap;
}
.brand {
  display: flex;
  gap: 12px;
  align-items: flex-start;
  height: 82px;
  padding-left: 4px;
  font-size: 16px;
  line-height: 19px;
  color: #242527;
}
h1 {
  font-size: 24px;
  line-height: 28px;
  margin-bottom: 2px;
}
h1 b {
  font-weight: 500;
}
.rest {
  margin-left: 1px;
}
.intro {
  font-size: 13px;
  line-height: 20px;
}
.intro.strong {
  font-weight: 500;
}
.box {
  position: relative;
  width: 560px;
  border: 1px solid #303234;
  border-radius: 4px;
  padding-left: 16px;
}
.legend {
  position: absolute;
  left: 16px;
  top: -9px;
  line-height: 18px;
  font-size: 12px;
  font-weight: 500;
  color: #292a2c;
  background: #666;
}
.profile {
  margin-top: 48px;
  height: 70px;
  padding-top: 17px;
}
.name {
  font-size: 14px;
  line-height: 18px;
  margin-bottom: 1px;
  color: #141516;
}
.org {
  font-size: 12px;
  line-height: 16px;
  color: #1a1b1c;
}
.note {
  margin: 8px 0 0 16px;
  font-size: 12px;
  line-height: 16px;
  color: #2b2c2e;
}
.note a {
  color: #112f6b;
}
.method {
  margin-top: 32px;
  height: 58px;
  line-height: 56px;
  font-size: 14px;
}
.method a {
  color: #0b2a62;
}
.start {
  width: 96px;
  height: 33px;
  margin-top: 36px;
  border-radius: 3px;
  background: #172d62;
  box-shadow: 0 1px 3px rgba(0, 0, 0, 0.4);
  color: #747577;
  font-size: 13px;
  font-weight: 700;
}
.right {
  padding-top: 142px;
}
article {
  height: 112px;
}
h2,
article p {
  text-align: right;
  white-space: nowrap;
}
h2 {
  font-size: 20px;
  line-height: 24px;
  margin-bottom: 10px;
}
article p {
  font-size: 14px;
  line-height: 20px;
  letter-spacing: 0.2px;
  color: #0d0d0e;
}
.scrollbar {
  position: absolute;
  right: 1px;
  top: 1px;
  width: 9px;
  height: 444px;
  background: #545454;
  border: 1px solid #4b4b4b;
}

.dialog {
  position: absolute;
  left: 458px;
  top: 49px;
  width: 450px;
  height: 509px;
  padding: 24px;
  border-radius: 8px;
  background: #fff;
  color: #3c4043;
}
h3 {
  font-family: Inter, Roboto, sans-serif;
  font-size: 17px;
  font-weight: 300;
  line-height: 24px;
  color: #202124;
}
.hint {
  margin: 40px 0 16px;
  font-size: 12px;
  line-height: 16px;
}
.row {
  display: flex;
  align-items: center;
}
.row.second {
  margin: 35px 0;
}
.field {
  position: relative;
  height: 56px;
  border: 1px solid #80868b;
  border-radius: 4px;
  padding-left: 15px;
  line-height: 54px;
  font-size: 16px;
  color: #6a6e73;
}
.wide {
  width: 346px;
}
.half {
  width: 161px;
}
.half + .half {
  margin-left: 24px;
}
.help {
  width: 24px;
  height: 24px;
  margin-left: 20px;
}
.holder {
  border-color: #202124;
  color: #4a4d51;
  line-height: 56px;
}
.float {
  position: absolute;
  left: 11px;
  top: -10px;
  padding: 0 4px;
  background: #fff;
  font-size: 12px;
  line-height: 18px;
  color: #3c4043;
}
.check {
  display: flex;
  align-items: center;
  gap: 11px;
  margin: 38px 0 35px 11px;
  height: 18px;
  font-size: 12px;
}
.actions {
  display: flex;
  justify-content: flex-end;
  gap: 25px;
  font-family: Inter, Roboto, sans-serif;
  font-size: 14px;
  font-weight: 500;
}
.cancel {
  color: #1a73e8;
  padding-bottom: 1px;
}
.save {
  width: 116px;
  height: 36px;
  padding-bottom: 2px;
  border-radius: 4px;
  background: #1a73e8;
  color: #fff;
  font-weight: 600;
}
.watermark {
  position: absolute;
  left: 1073px;
  top: 528px;
  font-family: 'Open Sans', sans-serif;
  color: #949494;
}
.big {
  font-size: 19px;
  line-height: 26px;
}
.small {
  font-size: 14px;
  line-height: 20px;
}

.taskbar {
  height: 40px;
  flex: none;
  display: flex;
  background: #202020;
  color: #fff;
}
.win {
  width: 48px;
  display: grid;
  place-items: center;
}
.search {
  width: 288px;
  background: #333;
  border: 1px solid #5a5a5a;
  display: flex;
  align-items: center;
  padding-left: 11px;
  gap: 10px;
  font-size: 15px;
  color: #dcdcdc;
}
.taskview {
  width: 48px;
  margin-right: 3px;
  display: grid;
  place-items: center;
}
.app {
  position: relative;
  width: 48px;
  margin-right: 1px;
  display: grid;
  place-items: center;
}
.app.active {
  background: #4f4f4f;
}
.app.open::after,
.app.multi::after,
.app.active::after {
  content: '';
  position: absolute;
  bottom: 0;
  left: 4px;
  right: 4px;
  height: 2px;
  background: #fbdb85;
}
.app.active::after {
  left: 0;
  right: 0;
}
.app.multi::after {
  background: linear-gradient(90deg, #fbdb85 32px, #ad975c 32px);
}
.tray {
  flex: 1;
  display: flex;
  align-items: center;
  font-size: 12px;
}
.t-help {
  margin-left: 196px;
}
.t-up {
  margin-left: 10px;
}
.lang {
  width: 14px;
  margin-left: 17px;
  text-align: center;
  font-family: 'DejaVu Sans', sans-serif;
  font-size: 12px;
}
.clock {
  width: 68px;
  margin-left: 9px;
  text-align: center;
  line-height: 18px;
}
.t-note {
  margin: 3px 0 0 9px;
}
.t-copilot {
  margin-left: 12px;
}
.peek {
  width: 1px;
  height: 40px;
  margin-left: 17px;
  background: #666;
}
</style>
